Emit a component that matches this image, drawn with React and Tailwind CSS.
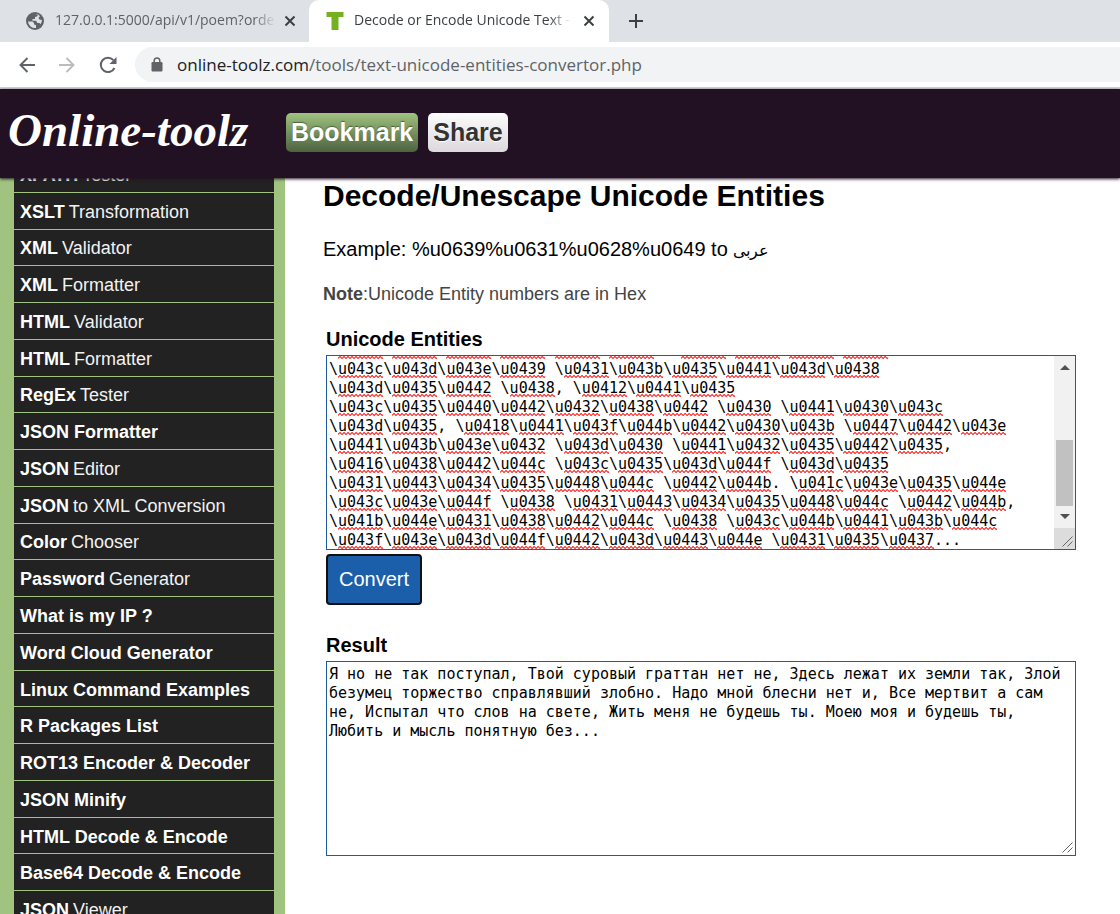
import { useLayoutEffect, useRef, useState } from "react";

const ENTITIES = String.raw`\u0437\u043b\u043e\u0431\u043d\u043e. \u041d\u0430\u0434\u043e
\u043c\u043d\u043e\u0439 \u0431\u043b\u0435\u0441\u043d\u0438
\u043d\u0435\u0442 \u0438, \u0412\u0441\u0435
\u043c\u0435\u0440\u0442\u0432\u0438\u0442 \u0430 \u0441\u0430\u043c
\u043d\u0435, \u0418\u0441\u043f\u044b\u0442\u0430\u043b \u0447\u0442\u043e
\u0441\u043b\u043e\u0432 \u043d\u0430 \u0441\u0432\u0435\u0442\u0435,
\u0416\u0438\u0442\u044c \u043c\u0435\u043d\u044f \u043d\u0435
\u0431\u0443\u0434\u0435\u0448\u044c \u0442\u044b. \u041c\u043e\u0435\u044e
\u043c\u043e\u044f \u0438 \u0431\u0443\u0434\u0435\u0448\u044c \u0442\u044b,
\u041b\u044e\u0431\u0438\u0442\u044c \u0438 \u043c\u044b\u0441\u043b\u044c
\u043f\u043e\u043d\u044f\u0442\u043d\u0443\u044e \u0431\u0435\u0437...`;

const RESULT = `Я но не так поступал, Твой суровый граттан нет не, Здесь лежат их земли так, Злой
безумец торжество справлявший злобно. Надо мной блесни нет и, Все мертвит а сам
не, Испытал что слов на свете, Жить меня не будешь ты. Моею моя и будешь ты,
Любить и мысль понятную без...`;

const TOOLS = [
  ["XPATH", "Tester"],
  ["XSLT", "Transformation"],
  ["XML", "Validator"],
  ["XML", "Formatter"],
  ["HTML", "Validator"],
  ["HTML", "Formatter"],
  ["RegEx", "Tester"],
  ["JSON Formatter", ""],
  ["JSON", "Editor"],
  ["JSON", "to XML Conversion"],
  ["Color", "Chooser"],
  ["Password", "Generator"],
  ["What is my IP ?", ""],
  ["Word Cloud Generator", ""],
  ["Linux Command Examples", ""],
  ["R Packages List", ""],
  ["ROT13 Encoder & Decoder", ""],
  ["JSON Minify", ""],
  ["HTML Decode & Encode", ""],
  ["Base64 Decode & Encode", ""],
  ["JSON", "Viewer"],
];

function CloseIcon() {
  return (
    <svg viewBox="0 0 12 12" className="size-3" fill="none" stroke="#3c4043" strokeWidth="2">
      <path d="M1.5 1.5l9 9M10.5 1.5l-9 9" />
    </svg>
  );
}

function Grip() {
  return (
    <svg viewBox="0 0 11 11" className="size-[11px]" stroke="#666" strokeWidth="1" fill="none">
      <path d="M0.5 10.5l10-10M5.5 10.5l5-5" />
    </svg>
  );
}

function TabStrip() {
  return (
    <div className="flex h-[42px] shrink-0 bg-[#dee1e6] font-['Open_Sans',sans-serif] text-[14px] leading-5 text-[#3c4043]">
      <div className="flex w-[309px] items-center rounded-br-lg pr-[9px] pl-[26px] text-[#5f6368]">
        <svg viewBox="0 0 18 18" className="size-[18px] shrink-0">
          <circle cx="9" cy="9" r="9" fill="#5f6368" />
          <path d="M2 9.500h4.500l1.500 1.500v1.500l2 .5v3A7 7 0 0 1 2 9.500z" fill="#dee1e6" />
          <path d="M8 2h4.500L11 4.500 9 5v2H6.500v1.800H10l1.500 2.200h2l1 1.200A7 7 0 0 0 16 8l-2.500-.5-1-1.500 1.500-2A7 7 0 0 0 8 2z" fill="#dee1e6" />
        </svg>
        <span className="ml-[11px] flex-1 overflow-hidden pb-0.5 whitespace-nowrap [mask-image:linear-gradient(to_right,black_90%,transparent)]">
          127.0.0.1:5000/api/v1/poem?order
        </span>
        <button aria-label="Close tab" className="ml-1 p-1">
          <CloseIcon />
        </button>
      </div>
      <div className="flex w-[300px] items-center rounded-t-[10px] bg-white pr-[10px] pl-[17px]">
        <svg viewBox="0 0 18 20" className="h-5 w-[18px] shrink-0">
          <path d="M0.500 1h17v5h-5v13h-7V6h-5z" fill="#76b020" />
        </svg>
        <span className="ml-[10px] flex-1 overflow-hidden pb-0.5 whitespace-nowrap [mask-image:linear-gradient(to_right,black_90%,transparent)]">
          Decode or Encode Unicode Text - Online
        </span>
        <button aria-label="Close tab" className="ml-2 p-1">
          <CloseIcon />
        </button>
      </div>
      <button aria-label="New tab" className="flex items-center px-5">
        <svg viewBox="0 0 14 14" className="size-[14px]" stroke="#3c4043" strokeWidth="2">
          <path d="M7 0v14M0 7h14" />
        </svg>
      </button>
    </div>
  );
}

function Toolbar() {
  return (
    <div className="flex h-[47px] shrink-0 items-center border-b-2 border-[#d5d8dc] bg-white pl-[19px]">
      <button aria-label="Back">
        <svg viewBox="0 0 16 16" className="size-4" fill="none" stroke="#5f6368" strokeWidth="1.900">
          <path d="M16 8H1.500M8.500 1L1.500 8l7 7" />
        </svg>
      </button>
      <button aria-label="Forward" className="ml-6">
        <svg viewBox="0 0 16 16" className="size-4" fill="none" stroke="#babcbe" strokeWidth="1.900">
          <path d="M0 8h14.500M7.500 1l7 7-7 7" />
        </svg>
      </button>
      <button aria-label="Reload" className="ml-6">
        <svg viewBox="0 0 18 18" className="size-[18px]" fill="none" stroke="#5f6368" strokeWidth="2">
          <path d="M15.500 12A7.200 7.200 0 1 1 14.300 4" />
          <path d="M17.500 1v7h-7z" fill="#5f6368" stroke="none" />
        </svg>
      </button>
      <div className="ml-[18px] flex h-[35px] flex-1 items-center rounded-l-full bg-[#f1f3f4] pl-4">
        <svg viewBox="0 0 12 15" className="h-[15px] w-3 shrink-0">
          <rect x="0.500" y="5" width="11" height="9.500" rx="1.200" fill="#5f6368" />
          <path d="M3.200 5.500V3.800a2.800 2.800 0 0 1 5.600 0v1.700" fill="none" stroke="#5f6368" strokeWidth="1.500" />
        </svg>
        <span className="ml-[14px] font-['Open_Sans',sans-serif] text-[17px] leading-6 text-[#5f6368]">
          <span className="text-[#202124]">online-toolz.com</span>/tools/text-unicode-entities-convertor.php
        </span>
      </div>
    </div>
  );
}

function SiteHeader() {
  return (
    <header className="relative z-10 flex h-[89px] shrink-0 items-center bg-[#221122] pb-0.5 pl-2 shadow-[0_1px_3px_#221122]">
      <a
        href="#home"
        className="w-[278px] pb-1.5 font-['Liberation_Serif',serif] text-[47px] leading-[50px] font-bold text-white italic"
      >
        Online-toolz
      </a>
      <button className="h-[39px] rounded-[5px] bg-linear-to-b from-[#a0c380] to-[#4d6340] px-[5px] text-[25px] leading-[39px] font-bold text-white [text-shadow:0_-1px_1px_#4d6340]">
        Bookmark
      </button>
      <button className="ml-[10px] h-[39px] rounded-[5px] bg-linear-to-b from-[#fcfcfc] to-[#dcd8dc] px-[5px] text-[25px] leading-[39px] font-bold text-[#333] [text-shadow:0_1px_1px_#fff]">
        Share
      </button>
    </header>
  );
}

function Sidebar() {
  return (
    <nav className="w-[285px] shrink-0 bg-[#a0c380] pr-[11px] pl-[14px]">
      <ul className="grid h-[772px] auto-rows-fr text-[18px] text-[#f2f2f2]">
        {TOOLS.map(([name, rest]) => (
          <li key={name + rest} className="flex border-b border-[#a0c380] bg-[#222]">
            <a href="#tool" className="flex flex-1 items-center gap-1 pt-[3px] pl-1.5 whitespace-nowrap">
              <b className="text-white">{name}</b>
              {rest && <span>{rest}</span>}
            </a>
          </li>
        ))}
      </ul>
    </nav>
  );
}

function Squiggle() {
  return (
    <svg
      viewBox="0 0 45 3"
      preserveAspectRatio="none"
      className="mb-px h-[3px] w-[5ch]"
      fill="none"
      stroke="#f00"
      strokeWidth="1"
    >
      <path d="M0 2.500l2-2 2 2 2-2 2 2 2-2 2 2 2-2 2 2 2-2 2 2 2-2 2 2 2-2 2 2 2-2 2 2 2-2 2 2 2-2 2 2 2-2 2 2 1-1" />
    </svg>
  );
}

function EntitiesInput() {
  const [value, setValue] = useState(ENTITIES);
  const input = useRef(null);
  const marks = useRef(null);

  useLayoutEffect(() => {
    input.current.scrollTop = 15;
    marks.current.scrollTop = 15;
  }, []);

  return (
    <div className="flex h-[195px] border border-[#1d5c9e] bg-white">
      <div className="relative flex min-w-0 flex-1">
        <div
          ref={marks}
          aria-hidden="true"
          className="absolute inset-0 overflow-hidden pl-[2px] font-['DejaVu_Sans_Mono',monospace] text-[15px]"
        >
          {value.split("\n").map((line, row) => (
            <div key={row} className="flex h-[19px] items-end">
              {line.split(/(u[0-9a-f]{4})/).map((part, i) =>
                i % 2 ? <Squiggle key={i} /> : <span key={i} style={{ width: `${part.length}ch` }} />,
              )}
            </div>
          ))}
        </div>
        <textarea
          id="entities"
          ref={input}
          value={value}
          spellCheck={false}
          onChange={(e) => setValue(e.target.value)}
          onScroll={(e) => (marks.current.scrollTop = e.target.scrollTop)}
          className="relative flex-1 resize-none overflow-hidden bg-transparent pl-[2px] font-['DejaVu_Sans_Mono',monospace] text-[15px] leading-[19px] whitespace-pre text-black outline-none"
        />
      </div>
      <div className="flex w-[21px] flex-col items-center bg-[#f1f1f1]">
        <svg viewBox="0 0 10 5" className="mt-[9px] h-[5px] w-[10px]">
          <path d="M0 5l5-5 5 5z" fill="#505050" />
        </svg>
        <div className="mt-[70px] h-[66px] w-[17px] bg-[#c1c1c1]" />
        <svg viewBox="0 0 10 5" className="mt-2 h-[5px] w-[10px]">
          <path d="M0 0l5 5 5-5z" fill="#505050" />
        </svg>
        <div className="mt-auto flex h-[21px] w-full items-end justify-end bg-[#dcdcdc] p-[2px]">
          <Grip />
        </div>
      </div>
    </div>
  );
}

export default function App() {
  return (
    <div className="flex h-screen flex-col overflow-hidden bg-white font-['Liberation_Sans',Arial,sans-serif]">
      <TabStrip />
      <Toolbar />
      <SiteHeader />
      <div className="-mt-[22px] flex">
        <Sidebar />
        <main className="min-w-0 flex-1 pt-[23px] pr-11 pl-[38px] text-black">
          <h1 className="text-[30px] leading-[34px] font-bold">Decode/Unescape Unicode Entities</h1>
          <p className="mt-6 text-[20px] leading-6">
            Example: %u0639%u0631%u0628%u0649 to{" "}
            <span dir="rtl" className="text-[16px]">
              عربى
            </span>
          </p>
          <p className="mt-[19px] text-[18px] leading-6 text-[#444]">
            <b>Note</b>:Unicode Entity numbers are in Hex
          </p>
          <form className="mt-[19px] pl-[3px]" onSubmit={(e) => e.preventDefault()}>
            <label htmlFor="entities" className="block pb-0.5 text-[20px] leading-7 font-bold">
              Unicode Entities
            </label>
            <EntitiesInput />
            <button className="mt-1 block h-[51px] rounded border-2 border-[#101010] bg-[#1b5fab] px-[11px] pb-0.5 text-[20px] text-white">
              Convert
            </button>
            <label htmlFor="result" className="mt-[26px] block pb-0.5 text-[20px] leading-7 font-bold">
              Result
            </label>
            <div className="relative">
              <textarea
                id="result"
                defaultValue={RESULT}
                spellCheck={false}
                className="block h-[195px] w-full resize-none overflow-hidden border border-[#1d5c9e] bg-white px-[2px] py-[3px] font-['DejaVu_Sans_Mono',monospace] text-[15px] leading-[19px] whitespace-pre text-black outline-none"
              />
              <div className="pointer-events-none absolute right-[3px] bottom-[3px]">
                <Grip />
              </div>
            </div>
          </form>
        </main>
      </div>
    </div>
  );
}
